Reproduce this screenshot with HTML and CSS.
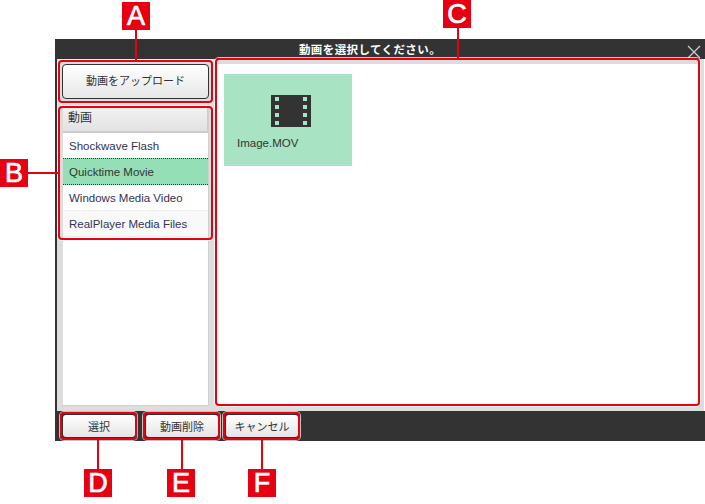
FILE: index.html
```html
<!DOCTYPE html>
<html lang="ja">
<head>
    <meta charset="UTF-8">
    <title>動画を選択してください。</title>
    <link rel="stylesheet" href="styles.css">
</head>
<body>
    <div class="window">
        <div class="titlebar">
            <span class="title">動画を選択してください。</span>
            <svg class="close" width="14" height="14" viewBox="0 0 14 14"><path d="M1 1L13 13M13 1L1 13" stroke="#d0d0d0" stroke-width="1.2" fill="none"/></svg>
        </div>
        <div class="content">
            <div class="sidebar">
                <button class="upload">動画をアップロード</button>
                <div class="list">
                    <div class="list-head">動画</div>
                    <div class="list-row">Shockwave Flash</div>
                    <div class="list-row active">Quicktime Movie</div>
                    <div class="list-row">Windows Media Video</div>
                    <div class="list-row alt">RealPlayer Media Files</div>
                </div>
            </div>
            <div class="files">
                <div class="file">
                    <svg class="film" width="40" height="32" viewBox="0 0 40 32">
                        <path fill="#333" fill-rule="evenodd" d="M0 0H40V32H0ZM4 2V6H8V2ZM32 2V6H36V2ZM4 10V14H8V10ZM32 10V14H36V10ZM4 18V22H8V18ZM32 18V22H36V18ZM4 26V30H8V26ZM32 26V30H36V26Z"/>
                    </svg>
                    <div class="file-name">Image.MOV</div>
                </div>
            </div>
        </div>
        <div class="footer">
            <button class="btn">選択</button>
            <button class="btn btn-delete">動画削除</button>
            <button class="btn btn-cancel">キャンセル</button>
        </div>
    </div>

    <!-- callouts -->
    <div class="mark mark-a"></div>
    <div class="mark mark-b"></div>
    <div class="mark mark-c"></div>
    <div class="mark mark-d"></div>
    <div class="mark mark-e"></div>
    <div class="mark mark-f"></div>
    <div class="line line-a"></div>
    <div class="line line-b"></div>
    <div class="line line-c"></div>
    <div class="line line-d"></div>
    <div class="line line-e"></div>
    <div class="line line-f"></div>
    <div class="tag tag-a">A</div>
    <div class="tag tag-b">B</div>
    <div class="tag tag-c">C</div>
    <div class="tag tag-d">D</div>
    <div class="tag tag-e">E</div>
    <div class="tag tag-f">F</div>
</body>
</html>
```

FILE: styles.css
```css
html, body{
    margin: 0;
    padding: 0;
    width: 705px;
    height: 504px;
    overflow: hidden;
    background-color: #fff;
    font-family: "Liberation Sans", "Noto Sans CJK JP", sans-serif;
    color: #333;
}

.window{
    position: relative;
    margin: 39px 0 0 55px;
    width: 648px;
    height: 402px;
    border-left: 2px solid #333;
    display: flex;
    flex-direction: column;
}

.titlebar{
    height: 20px;
    background-color: #333;
    display: flex;
    justify-content: center;
    align-items: center;
    padding-right: 22px;
}

.title{
    color: #fff;
    font-size: 11.500px;
    font-weight: bold;
    letter-spacing: 0.4px;
}

.close{
    position: absolute;
    top: 6px;
    right: 4px;
}

.content{
    height: 352px;
    box-sizing: border-box;
    margin-right: 1px;
    padding: 5px;
    background-color: #ddd;
    display: flex;
    gap: 8px;
}

.sidebar{
    width: 147px;
    display: flex;
    flex-direction: column;
    gap: 8px;
}

.upload{
    height: 35px;
    flex: none;
    border: 1px solid #333;
    border-radius: 4px;
    padding: 0 0 4px;
    background: linear-gradient(#fff, #e6e6e6);
    font-family: inherit;
    font-size: 11px;
    color: #333;
}

.list{
    flex: 1;
    background-color: #fff;
    border: 1px solid #d0d0d0;
    border-top: 0;
    border-left-color: #ddd;
}

.list-head{
    height: 24px;
    padding-left: 5px;
    border-bottom: 2px solid #ccc;
    border-right: 1px solid #ccc;
    background: linear-gradient(#f2f2f2, #e2e2e2);
    font-size: 12px;
    line-height: 23px;
}

.list-row{
    height: 25px;
    padding-left: 6px;
    border-bottom: 1px solid #eee;
    font-size: 11.500px;
    line-height: 27px;
    color: #333355;
}

.list-row.active{
    background-color: #94dfb6;
    border-top: 1px dotted #333;
    border-bottom: 1px dotted #333;
    margin: -1px 0 0;
    color: #333;
}

.list-row.alt{
    background-color: #f9f9f9;
}

.files{
    flex: 1;
    background-color: #fff;
    padding: 10px 7px;
}

.file{
    width: 128px;
    height: 92px;
    background-color: #a8e4c4;
    display: flex;
    flex-direction: column;
}

.film{
    margin: 21px 0 0 47px;
}

.file-name{
    margin: 10px 0 0 13px;
    font-size: 11.500px;
}

.footer{
    flex: 1;
    background-color: #333;
    padding: 4px 6px;
    display: flex;
    align-items: flex-start;
    gap: 11px;
}

.btn{
    width: 72px;
    height: 22px;
    border: 0;
    border-radius: 3px;
    padding: 0;
    background: linear-gradient(#fff, #e4e4e4);
    font-family: inherit;
    font-size: 11px;
    color: #333;
}

.btn-cancel{
    margin-left: -3px;
}

/* red callouts over the window */
.mark{
    position: absolute;
    box-sizing: border-box;
    border: 2px solid #e60012;
    border-radius: 4px;
    box-shadow: 0 0 0 1px rgba(255, 255, 255, 0.7);
}
.mark-a{ left: 58px; top: 60px; width: 155px; height: 43px; }
.mark-b{ left: 58px; top: 106px; width: 155px; height: 134px; }
.mark-c{ left: 215px; top: 58px; width: 485px; height: 348px; }
.mark-d{ left: 60px; top: 412px; width: 77px; height: 28px; }
.mark-e{ left: 143px; top: 412px; width: 77px; height: 28px; }
.mark-f{ left: 223px; top: 412px; width: 77px; height: 28px; }

.line{
    position: absolute;
    background-color: #e60012;
}
.line-a{ left: 135px; top: 30px; width: 2px; height: 30px; }
.line-b{ left: 28px; top: 172px; width: 30px; height: 2px; }
.line-c{ left: 457px; top: 28px; width: 2px; height: 30px; }
.line-d{ left: 97px; top: 440px; width: 2px; height: 29px; }
.line-e{ left: 181px; top: 440px; width: 2px; height: 29px; }
.line-f{ left: 261px; top: 440px; width: 2px; height: 29px; }

.tag{
    position: absolute;
    width: 28px;
    height: 28px;
    background-color: #e60012;
    color: #fff;
    font-family: "Liberation Sans", sans-serif;
    font-size: 27px;
    line-height: 28px;
    text-align: center;
    -webkit-text-stroke: 0.7px #fff;
}
.tag-a{ left: 122px; top: 2px; }
.tag-b{ left: 0; top: 159px; }
.tag-c{ left: 443px; top: 0; }
.tag-d{ left: 84px; top: 469px; }
.tag-e{ left: 167px; top: 469px; }
.tag-f{ left: 248px; top: 469px; }
```
